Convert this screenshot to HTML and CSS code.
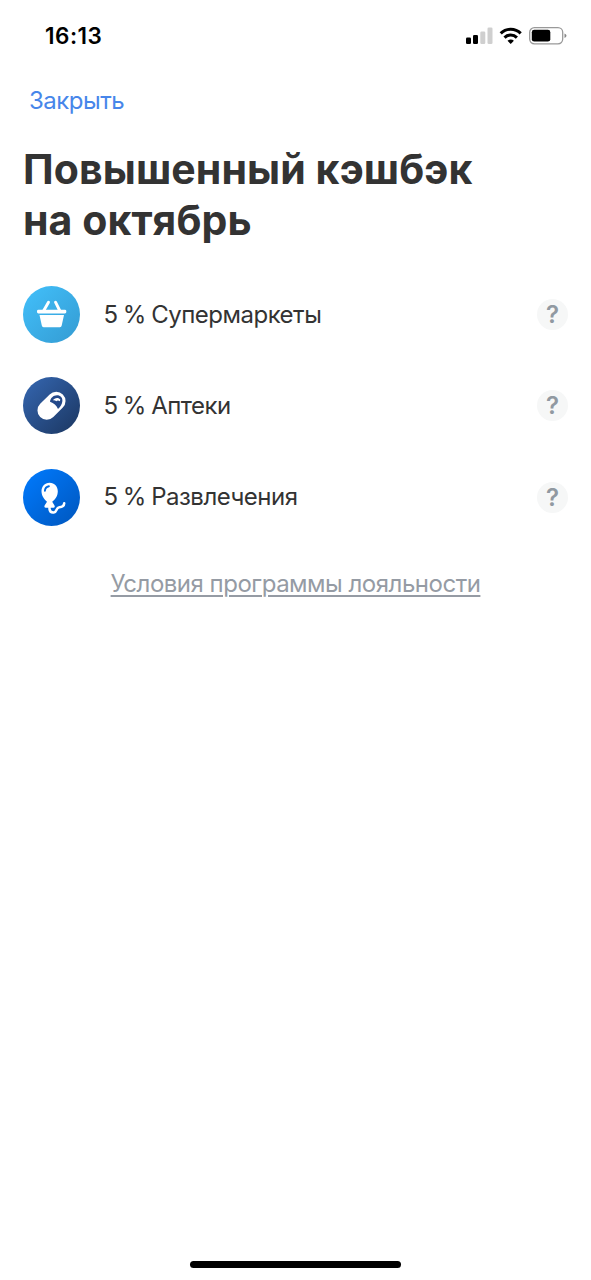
FILE: index.html
```html
<!DOCTYPE html>
<html lang="ru">
<head>
<meta charset="utf-8">
<title>Повышенный кэшбэк</title>
<link rel="stylesheet" href="styles.css">
</head>
<body>
<div class="screen">
  <header class="status">
    <span class="time">16:13</span>
    <svg class="indicators" width="104" height="20" viewBox="0 0 104 20">
      <rect x="1" y="11.500" width="5" height="6.500" rx="1.300"/>
      <rect x="8" y="9" width="5" height="9" rx="1.300"/>
      <g fill="#cfcfcf"><rect x="15.300" y="5.500" width="5" height="12.500" rx="1.300"/><rect x="22.500" y="1.500" width="5" height="16.500" rx="1.300"/></g>
      <g fill="none" stroke="#000" stroke-width="3">
        <path d="M35.700 7.400a14 14 0 0 1 20 0"/>
        <path d="M39.500 11.600a8.700 8.700 0 0 1 12.400 0"/>
      </g>
      <path d="M42.500 14.800a4.500 4.500 0 0 1 6.400 0L45.700 18z"/>
      <rect x="64.700" y="1.600" width="33" height="16.200" rx="4.700" fill="#fff" stroke="#999" stroke-width="1.300"/>
      <rect x="66.800" y="3.800" width="18.500" height="11.800" rx="2.400"/>
      <path d="M99.500 7.400q2 .7 2 2.300t-2 2.300z" fill="#888"/>
    </svg>
  </header>
  <a class="close">Закрыть</a>
  <h1 class="title">Повышенный кэшбэк<br>на октябрь</h1>
  <ul class="list">
    <li class="row">
      <svg class="icon" viewBox="0 0 57 57">
        <defs><linearGradient id="market" x2="1" y2="1"><stop stop-color="#42c0fb"/><stop offset="1" stop-color="#349bd2"/></linearGradient></defs>
        <circle cx="28.500" cy="28.500" r="28.500" fill="url(#market)"/>
        <path d="M25.500 16.200 20.500 25M32.500 16.200 36.900 25" stroke="#fff" stroke-width="2.900" stroke-linecap="round"/>
        <rect x="14" y="23.700" width="29.300" height="3.700" rx="1.400" fill="#fff"/>
        <path d="M16.500 29H41L38.700 39.600Q38.400 41.200 36.900 41.200H20.600Q19.100 41.200 18.800 39.600z" fill="#fff"/>
      </svg>
      <span class="label">5 % Супермаркеты</span><span class="help">?</span>
    </li>
    <li class="row">
      <svg class="icon" viewBox="0 0 57 57">
        <defs><linearGradient id="pharmacy" x2="1" y2="1"><stop stop-color="#3567b2"/><stop offset="1" stop-color="#1b3660"/></linearGradient></defs>
        <circle cx="28.500" cy="28.500" r="28.500" fill="url(#pharmacy)"/>
        <rect x="-16" y="-9.300" width="32" height="18.600" rx="9.300" fill="#fff" transform="translate(28.500 28.700) rotate(-45)"/>
        <path d="M27 24.800C27.300 21 30.400 18.200 34 18.200C37.500 18.200 39.700 20.800 39.400 24C39.100 27.200 37.600 29.700 35 31.900C33.500 28.700 30.900 26 27 24.800z" fill="#24498a"/>
        <path d="M29.800 23.300C31.200 20.700 35.600 19.900 37.300 22.500L36.900 24.200C35.500 23.200 34.500 23.100 33.300 24.200C32.200 23.300 31.300 23 29.800 23.300z" fill="#fff"/>
      </svg>
      <span class="label">5 % Аптеки</span><span class="help">?</span>
    </li>
    <li class="row">
      <svg class="icon" viewBox="0 0 57 57">
        <defs><linearGradient id="fun" x2="1" y2="1"><stop stop-color="#007bff"/><stop offset="1" stop-color="#0056bd"/></linearGradient></defs>
        <circle cx="28.500" cy="28.500" r="28.500" fill="url(#fun)"/>
        <path d="M26.600 13.700C21.600 13.700 18.500 17.600 18.500 22.200C18.500 26.500 21.200 30.500 24 32.700L21.600 36.600Q20.800 38.700 22.700 38.700H30.500Q32.400 38.700 31.500 36.600L29.200 32.700C32.500 30.500 34.800 26.500 34.800 22.200C34.800 17.600 31.600 13.700 26.600 13.700z" fill="#fff"/>
        <path d="M21.900 21.700Q22.100 18 25.900 17.200" fill="none" stroke="#0069e0" stroke-width="1.900" stroke-linecap="round"/>
        <path d="M26.500 37V40Q27 43.900 30.700 43.500C34.500 42.900 32.700 38.600 36.300 38.200C39.300 38 41 37.200 41.200 34.300" fill="none" stroke="#fff" stroke-width="2.500" stroke-linecap="round"/>
      </svg>
      <span class="label">5 % Развлечения</span><span class="help">?</span>
    </li>
  </ul>
  <a class="terms">Условия программы лояльности</a>
  <div class="home"></div>
</div>
</body>
</html>
```
FILE: styles.css
```css
* { box-sizing: border-box; }
body { margin: 0; background: #fff; color: #333; font-family: Inter, "Liberation Sans", sans-serif; }
.screen { display: flex; flex-direction: column; align-items: flex-start; width: 591px; height: 1280px; padding-bottom: 12px; }
.status { display: flex; justify-content: space-between; width: 100%; height: 72px; padding: 21px 22px 0 45px; color: #000; }
.time { font-size: 22.5px; font-weight: 600; line-height: 30px; letter-spacing: .5px; }
.indicators { margin-top: 5px; }
.close { margin: 14px 0 0 29px; color: #4786ea; font-size: 24px; line-height: 30px; letter-spacing: -.5px; }
.title { margin: 28px 0 0 23px; font-size: 41px; font-weight: 700; line-height: 51px; letter-spacing: .1px; white-space: nowrap; }
.list { display: flex; flex-direction: column; gap: 34.4px; width: 100%; margin: 40px 0 0; padding: 0 23px; list-style: none; }
.row { display: flex; align-items: center; height: 57px; }
.icon { width: 57px; height: 57px; margin-right: 23.5px; }
.label { font-size: 24px; line-height: 30px; letter-spacing: -.5px; word-spacing: -1px; white-space: nowrap; }
.help { display: flex; align-items: center; justify-content: center; width: 31px; height: 31px; margin-left: auto; border-radius: 50%; background: #f6f7f7; color: #9199a1; font-size: 24px; font-weight: 600; }
.terms { align-self: center; margin-top: 43px; color: #959ba4; font-size: 24px; line-height: 30px; letter-spacing: -.49px; text-decoration: underline; text-decoration-thickness: 1.5px; text-underline-offset: 3px; white-space: nowrap; }
.home { align-self: center; width: 211px; height: 7px; margin-top: auto; border-radius: 4px; background: #000; }
```
